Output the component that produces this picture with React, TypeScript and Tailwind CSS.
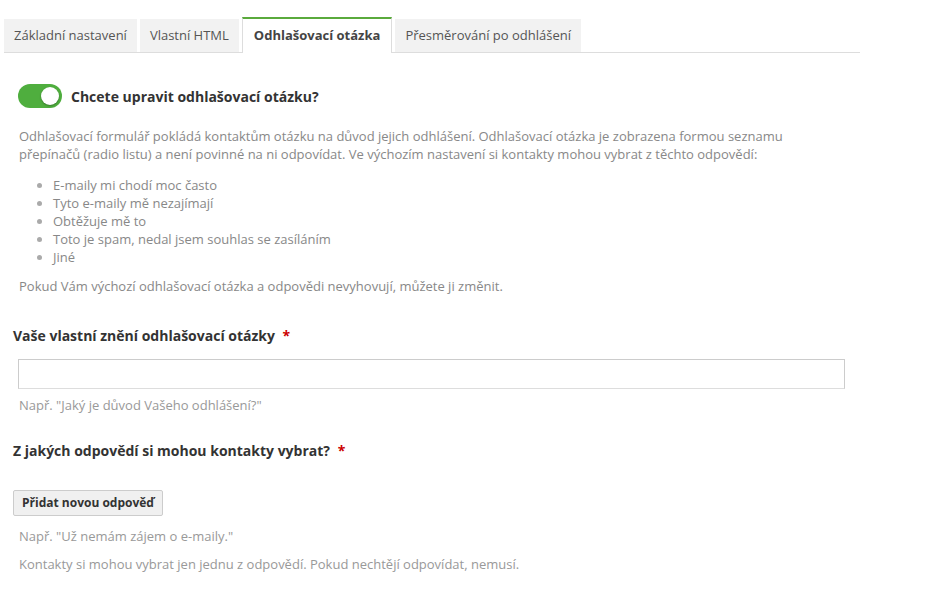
import { useState } from 'react';

// Nastavení odhlašovací otázky – záložky + formulář

const TABS = ['Základní nastavení', 'Vlastní HTML', 'Odhlašovací otázka', 'Přesměrování po odhlášení'];

const DEFAULT_ANSWERS = [
  'E-maily mi chodí moc často',
  'Tyto e-maily mě nezajímají',
  'Obtěžuje mě to',
  'Toto je spam, nedal jsem souhlas se zasíláním',
  'Jiné',
];

export default function App() {
  const [active, setActive] = useState(2);
  const [enabled, setEnabled] = useState(true);

  return (
    <div className="min-h-screen bg-white text-[13px] text-[#555] font-['Open_Sans',sans-serif]">
      {/* záložky */}
      <div className="flex items-end gap-[3px] ml-[4px] mr-[78px] pt-[17px] border-b border-[#ddd]">
        {TABS.map((t, i) => (
          <button
            key={t}
            onClick={() => setActive(i)}
            className={
              i === active
                ? 'h-[36px] px-[11px] bg-white border-t-2 border-x border-t-[#5aaa3c] border-x-[#ddd] -mb-px font-bold text-[#444]'
                : 'h-[33px] px-[10px] bg-[#f2f2f2] text-[#555]'
            }
          >
            {t}
          </button>
        ))}
      </div>

      {/* přepínač */}
      <div className="flex items-center gap-[9px] mt-[31px] ml-[18px]">
        <button
          onClick={() => setEnabled(!enabled)}
          className={`w-[44px] h-[24px] rounded-full flex items-center px-[3px] ${enabled ? 'bg-[#4fae3e] justify-end' : 'bg-[#ccc] justify-start'}`}
        >
          <span className="w-[18px] h-[18px] rounded-full bg-white shadow-[0_1px_2px_rgba(0,0,0,0.3)]" />
        </button>
        <span className="text-[14px] font-bold text-[#333]">Chcete upravit odhlašovací otázku?</span>
      </div>

      <div className="ml-[19px] mr-[100px] mt-[19px] text-[#888] leading-[18px]">
        <p className="max-w-[780px]">
          Odhlašovací formulář pokládá kontaktům otázku na důvod jejich odhlášení. Odhlašovací otázka je zobrazena formou seznamu přepínačů (radio listu) a není povinné na ni odpovídat. Ve výchozím nastavení si kontakty mohou vybrat z těchto odpovědí:
        </p>
        <ul className="list-disc pl-[34px] mt-[13px] marker:text-[#aaa]">
          {DEFAULT_ANSWERS.map((a) => (
            <li key={a}>{a}</li>
          ))}
        </ul>
        <p className="mt-[11px]">Pokud Vám výchozí odhlašovací otázka a odpovědi nevyhovují, můžete ji změnit.</p>
      </div>

      {/* vlastní otázka */}
      <div className="ml-[13px] mt-[30px]">
        <h3 className="text-[14px] font-bold text-[#333]">
          Vaše vlastní znění odhlašovací otázky <span className="text-[#c00] ml-[4px]">*</span>
        </h3>
        <input
          type="text"
          className="block mt-[13px] ml-[5px] w-[827px] h-[30px] border border-[#ccc] border-b-[#ddd] px-2 outline-none"
        />
        <p className="ml-[6px] mt-[7px] text-[#999]">Např. "Jaký je důvod Vašeho odhlášení?"</p>
      </div>

      {/* odpovědi */}
      <div className="ml-[13px] mt-[24px]">
        <h3 className="text-[14px] font-bold text-[#333]">
          Z jakých odpovědí si mohou kontakty vybrat? <span className="text-[#c00] ml-[4px]">*</span>
        </h3>
        <button className="mt-[29px] h-[26px] px-[8px] bg-[#f0f0f0] border border-[#ccc] rounded-[2px] text-[12px] font-bold text-[#333]">
          Přidat novou odpověď
        </button>
        <p className="ml-[6px] mt-[11px] text-[#999]">Např. "Už nemám zájem o e-maily."</p>
        <p className="ml-[6px] mt-[9px] text-[#999]">Kontakty si mohou vybrat jen jednu z odpovědí. Pokud nechtějí odpovídat, nemusí.</p>
      </div>
    </div>
  );
}
